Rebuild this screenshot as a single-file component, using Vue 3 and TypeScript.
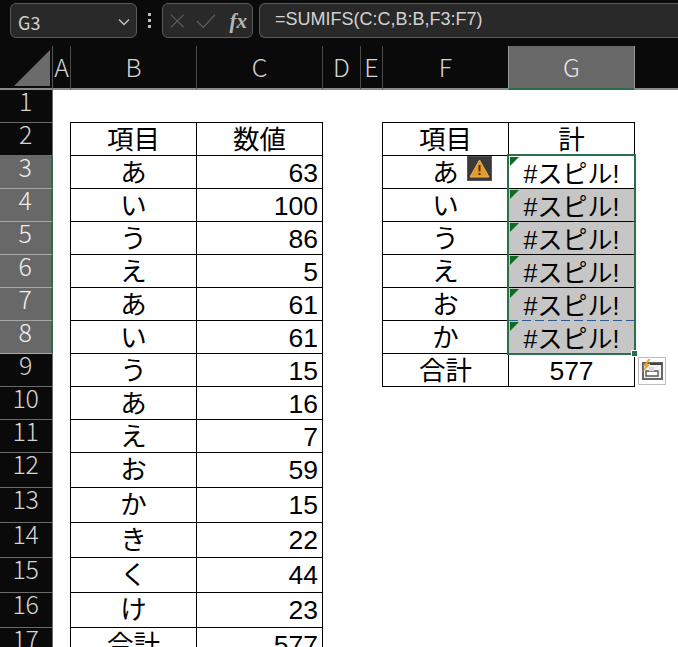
<script setup lang="ts">
type Cell = { text: string; cls: string[] }

const colNames = ['A', 'B', 'C', 'D', 'E', 'F', 'G']
const rowNumbers = Array.from({ length: 17 }, (_, i) => i + 1)

const leftTable: [string, string][] = [
  ['項目', '数値'],
  ['あ', '63'],
  ['い', '100'],
  ['う', '86'],
  ['え', '5'],
  ['あ', '61'],
  ['い', '61'],
  ['う', '15'],
  ['あ', '16'],
  ['え', '7'],
  ['お', '59'],
  ['か', '15'],
  ['き', '22'],
  ['く', '44'],
  ['け', '23'],
  ['合計', '577'],
]

const rightTable: [string, string][] = [
  ['項目', '計'],
  ['あ', '#スピル!'],
  ['い', '#スピル!'],
  ['う', '#スピル!'],
  ['え', '#スピル!'],
  ['お', '#スピル!'],
  ['か', '#スピル!'],
  ['合計', '577'],
]

function cellAt(row: number, col: string): Cell {
  const left = leftTable[row - 2]
  const right = rightTable[row - 2]
  if (col === 'B' && left) return { text: left[0], cls: ['bd', 'mid'] }
  if (col === 'C' && left) {
    return { text: left[1], cls: ['bd', row === 2 ? 'mid' : 'num'] }
  }
  if (col === 'F' && right) return { text: right[0], cls: ['bd', 'mid'] }
  if (col === 'G' && right) {
    const cls = ['bd', 'mid']
    if (row >= 3 && row <= 8) cls.push('spill')
    if (row >= 4 && row <= 8) cls.push('picked')
    if (row === 8) cls.push('dashed')
    return { text: right[1], cls }
  }
  return { text: '', cls: [] }
}
</script>

<template>
  <div class="window">
    <div class="formula-bar">
      <div class="name-box">
        <span>G3</span>
        <svg width="12" height="8" viewBox="0 0 12 8"><path d="M1 1.5 L6 6.5 L11 1.5" fill="none" stroke="#c8c8c8" stroke-width="1.3" /></svg>
      </div>
      <div class="grip"><i /><i /><i /></div>
      <div class="buttons">
        <svg width="16" height="16" viewBox="0 0 16 16"><path d="M1 1 L15 15 M15 1 L1 15" stroke="#5e5e5e" stroke-width="1.4" /></svg>
        <svg width="22" height="16" viewBox="0 0 22 16"><path d="M1 8 L8 15 L21 1" fill="none" stroke="#5e5e5e" stroke-width="1.4" /></svg>
        <span class="fx">fx</span>
      </div>
      <div class="formula">=SUMIFS(C:C,B:B,F3:F7)</div>
    </div>

    <div class="sheet">
      <div class="corner">
        <svg width="53" height="43" viewBox="0 0 53 43"><path d="M14 40 L50 4 L50 40 Z" fill="#6b6b6b" /></svg>
      </div>
      <div
        v-for="name in colNames"
        :key="name"
        class="col-head"
        :class="{ active: name === 'G' }"
      >{{ name }}</div>
      <div class="col-rest" />

      <template v-for="row in rowNumbers" :key="row">
        <div class="row-head" :class="{ active: row >= 3 && row <= 8 }">{{ row }}</div>
        <div
          v-for="name in colNames"
          :key="name"
          class="cell"
          :class="cellAt(row, name).cls"
        >{{ cellAt(row, name).text }}</div>
        <div class="cell" />
      </template>

      <div class="selection" />
      <div class="handle" />

      <div class="warn">
        <svg width="21" height="19" viewBox="0 0 21 19">
          <path d="M10.5 1 L20 18 L1 18 Z" fill="#e59a2e" stroke="#f0b050" stroke-width="1" />
          <path d="M10.5 6 V12.5" stroke="#4a3210" stroke-width="2" />
          <path d="M10.5 14 V16" stroke="#4a3210" stroke-width="2" />
        </svg>
      </div>

      <div class="smart-tag">
        <svg width="26" height="26" viewBox="0 0 26 26">
          <path d="M4 5 H23 V21 H4 Z" fill="#f2f2f2" stroke="#666" stroke-width="2" />
          <path d="M11 6 H23" stroke="#444" stroke-width="2" />
          <path d="M7 13 H19 V18 H7 Z" fill="#fff" stroke="#555" stroke-width="1.4" />
          <path d="M10 9 H15 V13 H10 Z" fill="#ddd" />
          <path d="M9.5 1 L4 8 H6.5 L3 14.5 L11 6.5 H8 L11.5 1 Z" fill="#ee9a1e" />
        </svg>
      </div>
    </div>
  </div>
</template>

<style scoped>
.window {
  width: 678px;
  height: 647px;
  overflow: hidden;
  background: #0a0a0a;
  font-family: "Liberation Sans", "Noto Sans CJK JP", sans-serif;
}

.formula-bar {
  height: 46px;
  box-sizing: border-box;
  padding: 3px 0 8px 10px;
  display: flex;
  gap: 6px;
  color: #d2d2d2;
}

.name-box,
.buttons,
.formula {
  box-sizing: border-box;
  height: 35px;
  background: #292929;
  border: 1px solid #5a5a5a;
  border-radius: 6px;
  display: flex;
  align-items: center;
}

.name-box {
  width: 127px;
  padding: 2px 6px 0 7px;
  justify-content: space-between;
  font-family: "Noto Sans CJK JP", sans-serif;
  font-size: 18px;
}

.grip {
  width: 13px;
  display: flex;
  flex-direction: column;
  align-items: center;
  justify-content: center;
  gap: 3px;
}

.grip i {
  width: 3px;
  height: 3px;
  background: #bdbdbd;
}

.buttons {
  width: 91px;
  padding: 0 5px 0 7px;
  gap: 11px;
}

.fx {
  margin-left: 3px;
  font-family: "Liberation Serif", serif;
  font-style: italic;
  font-weight: 700;
  font-size: 21px;
  line-height: 30px;
  color: #b5b5b5;
}

.formula {
  flex: 1;
  padding: 0 0 3px 15px;
  border-right: 0;
  border-radius: 6px 0 0 6px;
  font-size: 18px;
}

.sheet {
  position: relative;
  display: grid;
  grid-template-columns: 53px 18px 126px 126px 38px 22px 126px 126px 43px;
  grid-template-rows: 44px repeat(11, 33px) repeat(6, 35px);
  background: #fff;
}

.corner,
.col-rest {
  background: #0a0a0a;
  border-bottom: 2px solid #8a8a8a;
}

.corner {
  box-sizing: border-box;
  border-right: 1px solid #555;
}

.col-head {
  box-sizing: border-box;
  background: #0a0a0a;
  border-right: 1px solid #4a4a4a;
  border-bottom: 2px solid #8a8a8a;
  color: #d4d4d4;
  font-family: "Noto Sans CJK JP", sans-serif;
  font-weight: 300;
  font-size: 25px;
  line-height: 40px;
  text-align: center;
}

.col-head.active {
  background: #686868;
  color: #e6e6e6;
  border-left: 1px solid #9a9a9a;
  border-right: 1px solid #9a9a9a;
  border-bottom-color: #2b6e4c;
  margin-left: -1px;
}

.row-head {
  box-sizing: border-box;
  background: #0a0a0a;
  border-right: 1px solid #6a6a6a;
  border-bottom: 1px solid #6a6a6a;
  color: #d4d4d4;
  font-family: "Noto Sans CJK JP", sans-serif;
  font-weight: 300;
  font-size: 25px;
  line-height: 20px;
  letter-spacing: -0.5px;
  text-align: center;
  padding-right: 1px;
}

.row-head.active {
  background: #686868;
  color: #eee;
  border-bottom-color: #a8a8a8;
  border-right: 2px solid #2b6e4c;
}

.cell {
  box-sizing: border-box;
  min-width: 0;
  color: #000;
  font-size: 26.5px;
  line-height: 35px;
  white-space: nowrap;
}

.bd {
  border: 1px solid #000;
  margin: -1px 0 0 -1px;
}

.mid {
  text-align: center;
}

.num {
  text-align: right;
  padding-right: 4px;
}

.spill {
  position: relative;
  font-size: 25px;
  line-height: 36px;
}

.spill::before {
  content: "";
  position: absolute;
  left: 1px;
  top: 1px;
  border-top: 9px solid #0d6b22;
  border-right: 9px solid transparent;
}

.picked {
  background: #c6c6c6;
}

.dashed {
  border-top-color: #c6c6c6;
}

.dashed::after {
  content: "";
  position: absolute;
  left: 0;
  right: 0;
  top: -1px;
  height: 1px;
  background: repeating-linear-gradient(90deg, #2d5c94 0 9px, transparent 9px 13px);
}

.selection {
  position: absolute;
  left: 507px;
  top: 108px;
  width: 129px;
  height: 201px;
  box-sizing: border-box;
  border: 2px solid #2b6e4c;
  pointer-events: none;
}

.handle {
  position: absolute;
  left: 631px;
  top: 304px;
  width: 5px;
  height: 5px;
  background: #2b6e4c;
  border: 1px solid #fff;
}

.warn {
  position: absolute;
  left: 467px;
  top: 110px;
  width: 25px;
  height: 25px;
  box-sizing: border-box;
  background: #3a3a3a;
  border: 1px solid #555;
  display: flex;
  align-items: center;
  justify-content: center;
}

.smart-tag {
  position: absolute;
  left: 638px;
  top: 311px;
  width: 28px;
  height: 28px;
  box-sizing: border-box;
  background: #fff;
  border: 1px solid #bcbcbc;
  display: flex;
  align-items: center;
  justify-content: center;
}
</style>
